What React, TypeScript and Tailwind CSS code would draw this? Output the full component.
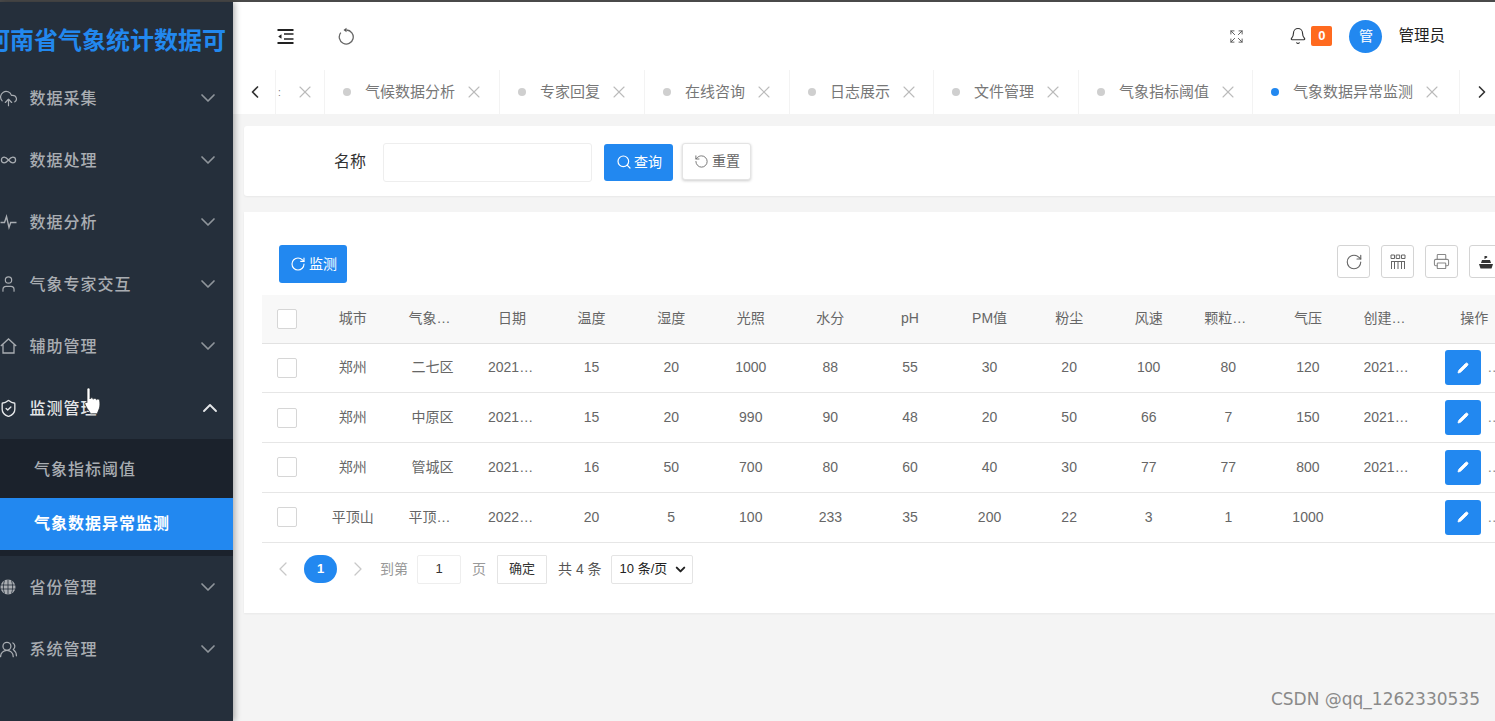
import React from "react";
import { Bell, ChevronDown, ChevronLeft, ChevronRight, ChevronUp, CloudUpload, Expand, Infinity as InfinityIcon, Pencil, Printer, RotateCw, Search, ShieldCheck, User, UsersRound, X } from "lucide-react";

const font = "font-['Liberation_Sans','Noto_Sans_CJK_SC',sans-serif]";

function Pulse() {
  return (
    <svg width="17" height="18" viewBox="0 0 17 18" fill="none" stroke="currentColor" strokeWidth="1.400">
      <path d="M0.500 9.500H4.500L6.500 3.500 9 14.500l1.700-5h5.800" />
    </svg>
  );
}
function HomeIcon() {
  return (
    <svg width="17" height="18" viewBox="0 0 17 18" fill="none" stroke="currentColor" strokeWidth="1.300">
      <path d="M0.800 9 8.500 2l7.700 7M3 7.500V16h11V7.500" />
    </svg>
  );
}
function GlobeFilled() {
  return (
    <svg width="17" height="18" viewBox="0 0 17 18">
      <circle cx="8" cy="9" r="7.500" fill="#a9adb2" />
      <path d="M1 7h14M1 11h14M8 1.500v15M4.500 2.500c-1.500 4-1.500 9 0 13M11.500 2.500c1.500 4 1.500 9 0 13" fill="none" stroke="#252f3b" strokeWidth="0.800" />
    </svg>
  );
}
const Cloud = () => <CloudUpload size={19} strokeWidth={1.500} className="-mx-[1px]" />;
const Inf = () => <InfinityIcon size={18} strokeWidth={1.800} />;
const Person = () => <User size={20} strokeWidth={1.500} className="-mx-[1px]" />;
const Shield = () => <ShieldCheck size={19} strokeWidth={1.700} className="-mx-[1px]" />;
const Users = () => <UsersRound size={19} strokeWidth={1.600} className="-mx-[1px]" />;

const menusTop = [
  { label: "数据采集", icon: Cloud },
  { label: "数据处理", icon: Inf },
  { label: "数据分析", icon: Pulse },
  { label: "气象专家交互", icon: Person },
  { label: "辅助管理", icon: HomeIcon },
];
const menusBottom = [
  { label: "省份管理", icon: GlobeFilled },
  { label: "系统管理", icon: Users },
];

function MenuItem({ label, icon: Icon, open }: { label: string; icon: React.ComponentType; open?: boolean }) {
  return (
    <div className={`flex h-[62px] items-center ${open ? "pr-[11px] text-[#e4e6e8]" : "pr-[13px] text-[#a9adb2]"}`}>
      <span className="flex w-[17px] shrink-0 justify-center">
        <Icon />
      </span>
      <span className="ml-[12.500px] flex-1 pt-[1px] text-[16px] font-medium tracking-[1px] whitespace-nowrap">{label}</span>
      {open ? <ChevronUp size={24} strokeWidth={1.900} /> : <ChevronDown size={24} strokeWidth={1.700} className="text-[#8f959b]" />}
    </div>
  );
}

function Sidebar() {
  return (
    <aside className="relative z-10 flex w-[233px] shrink-0 flex-col overflow-hidden bg-[#252f3b] shadow-[2px_0_6px_rgba(0,0,0,0.3)]">
      <div className="flex h-[65px] shrink-0 items-end overflow-hidden pb-[9px]">
        <div className="ml-[-14px] text-[24px] font-bold leading-[34px] whitespace-nowrap text-[#2288ee]">河南省气象统计数据可</div>
      </div>
      {menusTop.map((m) => (
        <MenuItem key={m.label} {...m} />
      ))}
      <MenuItem label="监测管理" icon={Shield} open />
      <div className="flex h-[117px] shrink-0 flex-col bg-[#1b222c] pb-[6px] text-[16px] font-medium tracking-[1px]">
        <div className="flex h-[59px] items-center pl-[34px] pt-[2px] text-[#a9adb2]">气象指标阈值</div>
        <div className="flex h-[52px] items-center bg-[#2288f0] pl-[34px] font-bold text-white">气象数据异常监测</div>
      </div>
      {menusBottom.map((m) => (
        <MenuItem key={m.label} {...m} />
      ))}
    </aside>
  );
}

function Cursor() {
  return (
    <svg className="absolute left-[84px] top-[387px] z-20" width="19" height="29" viewBox="0 0 19 29">
      <path
        d="M3 2.500C3 .5 6 .5 6 2.500V12c.3-1.600 3-1.600 3.300.300.400-1.500 3-1.300 3.200.500.500-1.200 3-1 3.200 1 .3 2.700.4 5.700-.5 8-.7 2-1.600 3.500-1.900 5H6.500c-.5-1.900-2.200-3.400-3.300-5.300C2.300 19.900 1.300 18.200.900 17c-.5-1.400 1.200-2.400 2.100-1.200z"
        fill="#fff"
        stroke="#20262d"
        strokeWidth="0.700"
      />
    </svg>
  );
}

const tabs = [
  { label: "气候数据分析", w: "w-[175px]" },
  { label: "专家回复", w: "w-[145px]" },
  { label: "在线咨询", w: "w-[145px]" },
  { label: "日志展示", w: "w-[144px]" },
  { label: "文件管理", w: "w-[145px]" },
  { label: "气象指标阈值", w: "w-[174px]" },
  { label: "气象数据异常监测", w: "w-[207px]", active: true },
];

function TopBar() {
  return (
    <header className="flex h-[68px] shrink-0 items-center bg-white pl-[44px] pr-[50px]">
      <svg width="17" height="15" viewBox="0 0 17 15" fill="none" stroke="#222">
        <path d="M0.500 1h16M0.500 14h16" strokeWidth="1.800" />
        <path d="M7 5h9.500M7 10h9.500" strokeWidth="1.300" />
        <path d="M4.500 5.200 1.200 7.500l3.300 2.300z" fill="#222" stroke="none" />
      </svg>
      <svg className="ml-[44px]" width="16" height="18" viewBox="0 0 16 18" fill="none" stroke="#666" strokeWidth="1.300">
        <path d="M8.500 3A7 7 0 1 1 2.800 5.600" />
        <path d="M8.500 0.800v4.400L5.500 3z" fill="#555" stroke="none" />
      </svg>
      <div className="flex-1" />
      <Expand size={15} strokeWidth={1.500} className="text-[#555]" />
      <Bell size={18} strokeWidth={1.500} className="ml-[45px] text-[#333]" />
      <span className="ml-[4px] flex h-[20px] w-[21px] items-center justify-center rounded-[2px] bg-[#ff6a1f] text-[13px] font-bold text-white">0</span>
      <span className="ml-[17px] flex h-[33px] w-[33px] items-center justify-center rounded-full bg-[#2288f0] text-[14px] font-medium text-[#e8f2fe]">管</span>
      <span className="ml-[16px] text-[15.500px] text-[#222]">管理员</span>
    </header>
  );
}

function CloseX() {
  return <X size={20} strokeWidth={1.300} className="-mr-[3px] ml-[9px] shrink-0 text-[#bbbbbb]" />;
}

function TabBar() {
  return (
    <nav className="flex h-[44px] shrink-0 items-center bg-white text-[15px] text-[#777]">
      <div className="flex h-full w-[43px] shrink-0 items-center justify-center border-r border-[#f3f3f3]">
        <ChevronLeft size={20} strokeWidth={2} className="ml-[1px] text-[#333]" />
      </div>
      <div className="flex h-full w-[49px] shrink-0 items-center border-r border-[#f3f3f3] pl-[2px]">
        <span className="w-[8px] text-[10px] text-[#777]">:</span>
        <CloseX />
      </div>
      {tabs.map((t) => (
        <div key={t.label} className={`flex h-full shrink-0 items-center border-r border-[#f3f3f3] pl-[18px] ${t.w}`}>
          <span className={`h-[8px] w-[8px] shrink-0 rounded-full ${t.active ? "bg-[#2288f0]" : "bg-[#cfcfcf]"}`} />
          <span className="ml-[14px] whitespace-nowrap">{t.label}</span>
          <CloseX />
        </div>
      ))}
      <div className="flex h-full flex-1 items-center justify-center pl-[9px]">
        <ChevronRight size={20} strokeWidth={2} className="text-[#333]" />
      </div>
    </nav>
  );
}

function SearchPanel() {
  return (
    <section className="ml-[11px] mt-[12px] flex h-[70px] shrink-0 items-center rounded-l-[3px] bg-white pt-[2px] shadow-[0_1px_2px_rgba(0,0,0,0.05)]">
      <span className="ml-[90px] text-[16px] text-[#333]">名称</span>
      <div className="ml-[17px] h-[39px] w-[209px] rounded-[3px] border border-[#eeeeee] bg-white" />
      <button className="ml-[12px] flex h-[37px] w-[69px] items-center gap-[2px] rounded-[3px] bg-[#2288f0] pl-[12px] text-[14px] text-white">
        <Search size={16} strokeWidth={1.800} />
        查询
      </button>
      <button className="ml-[9px] flex h-[37px] w-[69px] -translate-y-[1px] items-center gap-[3px] rounded-[3px] border border-[#e4e4e4] bg-white pl-[11px] text-[14px] text-[#666] shadow-[0_1px_3px_rgba(0,0,0,0.2)]">
        <RotateCw size={15} strokeWidth={1.400} className="-scale-x-100" />
        重置
      </button>
    </section>
  );
}

const iconBtn = "flex h-[33px] w-[33px] shrink-0 items-center justify-center rounded-[3px] border border-[#d4d4d4] bg-white text-[#666]";

function Toolbar() {
  return (
    <div className="flex h-[83px] shrink-0 items-start pl-[35px] pt-[33px]">
      <button className="flex h-[38px] w-[68px] shrink-0 items-center gap-[3px] rounded-[3px] bg-[#2288f0] pl-[11px] text-[14px] text-white">
        <RotateCw size={16} strokeWidth={1.700} />
        监测
      </button>
      <div className="ml-[990px] flex gap-[11px]">
        <div className={iconBtn}>
          <RotateCw size={18} strokeWidth={1.500} />
        </div>
        <div className={iconBtn}>
          <svg width="16" height="16" viewBox="0 0 16 16" fill="none" stroke="#666" strokeWidth="1">
            <path d="M1 1h3.500v3.500H1zM6.200 1h3.500v3.500H6.200zM11.500 1H15v3.500h-3.500zM1.500 7.500V15M4.500 7.500V15M8 7.500V15M11.500 7.500V15M14.500 7.500V15M1 7.500h14" />
          </svg>
        </div>
        <div className={iconBtn}>
          <Printer size={17} strokeWidth={1.500} className="text-[#888]" />
        </div>
        <div className={iconBtn}>
          <svg width="16" height="16" viewBox="0 0 16 16" fill="#333">
            <path d="M1 10h14l-1.500 4.500h-11zM3 9l1-3h8l1 3zM6.500 5V2h3l-1 1 1 1H7.500v1z" />
          </svg>
        </div>
      </div>
    </div>
  );
}

const headers = ["城市", "气象站名称", "日期", "温度", "湿度", "光照", "水分", "pH", "PM值", "粉尘", "风速", "颗粒物含量", "气压", "创建时间"];
const rows = [
  ["郑州", "二七区", "2021-12-01", "15", "20", "1000", "88", "55", "30", "20", "100", "80", "120", "2021-12-01"],
  ["郑州", "中原区", "2021-12-01", "15", "20", "990", "90", "48", "20", "50", "66", "7", "150", "2021-12-01"],
  ["郑州", "管城区", "2021-12-01", "16", "50", "700", "80", "60", "40", "30", "77", "77", "800", "2021-12-01"],
  ["平顶山", "平顶山区", "2022-01-01", "20", "5", "100", "233", "35", "200", "22", "3", "1", "1000", ""],
];

function Checkbox() {
  return <span className="block h-[20px] w-[20px] rounded-[2px] border border-[#d6d6d6] bg-white" />;
}

function Cell({ text }: { text: string }) {
  return (
    <td className="p-0 text-center">
      <div className="mx-auto w-[48px] truncate">{text}</div>
    </td>
  );
}

function DataTable() {
  return (
    <table className="ml-[18px] w-[1259px] min-w-[1259px] table-fixed border-collapse text-[14px] text-[#666]">
      <colgroup>
        <col className="w-[51px]" />
        {headers.map((h) => (
          <col key={h} className="w-[79.600px]" />
        ))}
        <col className="w-[94px]" />
      </colgroup>
      <thead>
        <tr className="h-[48px] border-b border-[#e2e2e2] bg-[#f8f8f8]">
          <th className="p-0 pl-[15px] font-normal">
            <Checkbox />
          </th>
          {headers.map((h) => (
            <th key={h} className="p-0 font-normal">
              <div className="mx-auto w-[48px] truncate">{h}</div>
            </th>
          ))}
          <th className="p-0 text-center font-normal">
            <span>操作</span>
          </th>
        </tr>
      </thead>
      <tbody>
        {rows.map((r, i) => (
          <tr key={i} className="h-[49.750px] border-b border-[#e6e6e6]">
            <td className="p-0 pl-[15px]">
              <Checkbox />
            </td>
            {r.map((c, j) => (
              <Cell key={j} text={c} />
            ))}
            <td className="p-0">
              <div className="flex items-center pl-[18px]">
                <button className="flex h-[35px] w-[36px] shrink-0 items-center justify-center rounded-[3px] bg-[#2288f0] text-white">
                  <Pencil size={12} strokeWidth={1.500} fill="#fff" />
                </button>
                <span className="ml-[6px] text-[#888]">…</span>
              </div>
            </td>
          </tr>
        ))}
      </tbody>
    </table>
  );
}

function Pagination() {
  return (
    <div className="ml-[18px] flex h-[70px] items-start pt-[12px] text-[14px] text-[#999]">
      <ChevronLeft size={24} strokeWidth={1.300} className="ml-[9px] mt-[2px] text-[#c8c8c8]" />
      <span className="ml-[9px] flex h-[28px] w-[33px] items-center justify-center rounded-full bg-[#2288f0] text-[13px] font-bold text-white">1</span>
      <ChevronRight size={24} strokeWidth={1.300} className="ml-[9px] mt-[2px] text-[#c8c8c8]" />
      <span className="ml-[10px] mt-[4px]">到第</span>
      <span className="ml-[9px] flex h-[29px] w-[44px] items-center justify-center rounded-[2px] border border-[#eeeeee] text-[13px] text-[#333]">1</span>
      <span className="ml-[11px] mt-[4px]">页</span>
      <span className="ml-[11px] flex h-[29px] w-[50px] items-center justify-center rounded-[1px] border border-[#e4e4e4] text-[13px] text-[#333]">确定</span>
      <span className="ml-[11px] mt-[4px] whitespace-nowrap text-[#555]">共 4 条</span>
      <span className="ml-[9px] flex h-[29px] w-[82px] items-center justify-between rounded-[2px] border border-[#e4e4e4] pl-[8px] pr-[4px] text-[13px] text-[#222]">
        10 条/页
        <ChevronDown size={15} strokeWidth={3.200} />
      </span>
    </div>
  );
}

export default function App() {
  return (
    <div className={`relative flex h-[721px] w-[1495px] flex-col overflow-hidden bg-[#f4f4f4] ${font}`}>
      <div className="h-[2px] shrink-0 bg-[#4a4a4a]" />
      <div className="flex min-h-0 flex-1">
        <Sidebar />
        <main className="flex min-w-0 flex-1 flex-col overflow-hidden">
          <TopBar />
          <TabBar />
          <SearchPanel />
          <section className="ml-[11px] mt-[16px] h-[401px] shrink-0 overflow-hidden bg-white shadow-[0_1px_2px_rgba(0,0,0,0.05)]">
            <Toolbar />
            <DataTable />
            <Pagination />
          </section>
        </main>
      </div>
      <Cursor />
      <div className="absolute bottom-[9px] right-[15px] z-20 font-['DejaVu_Sans',sans-serif] text-[17px] text-[#8a8a8a]">CSDN @qq_1262330535</div>
    </div>
  );
}
